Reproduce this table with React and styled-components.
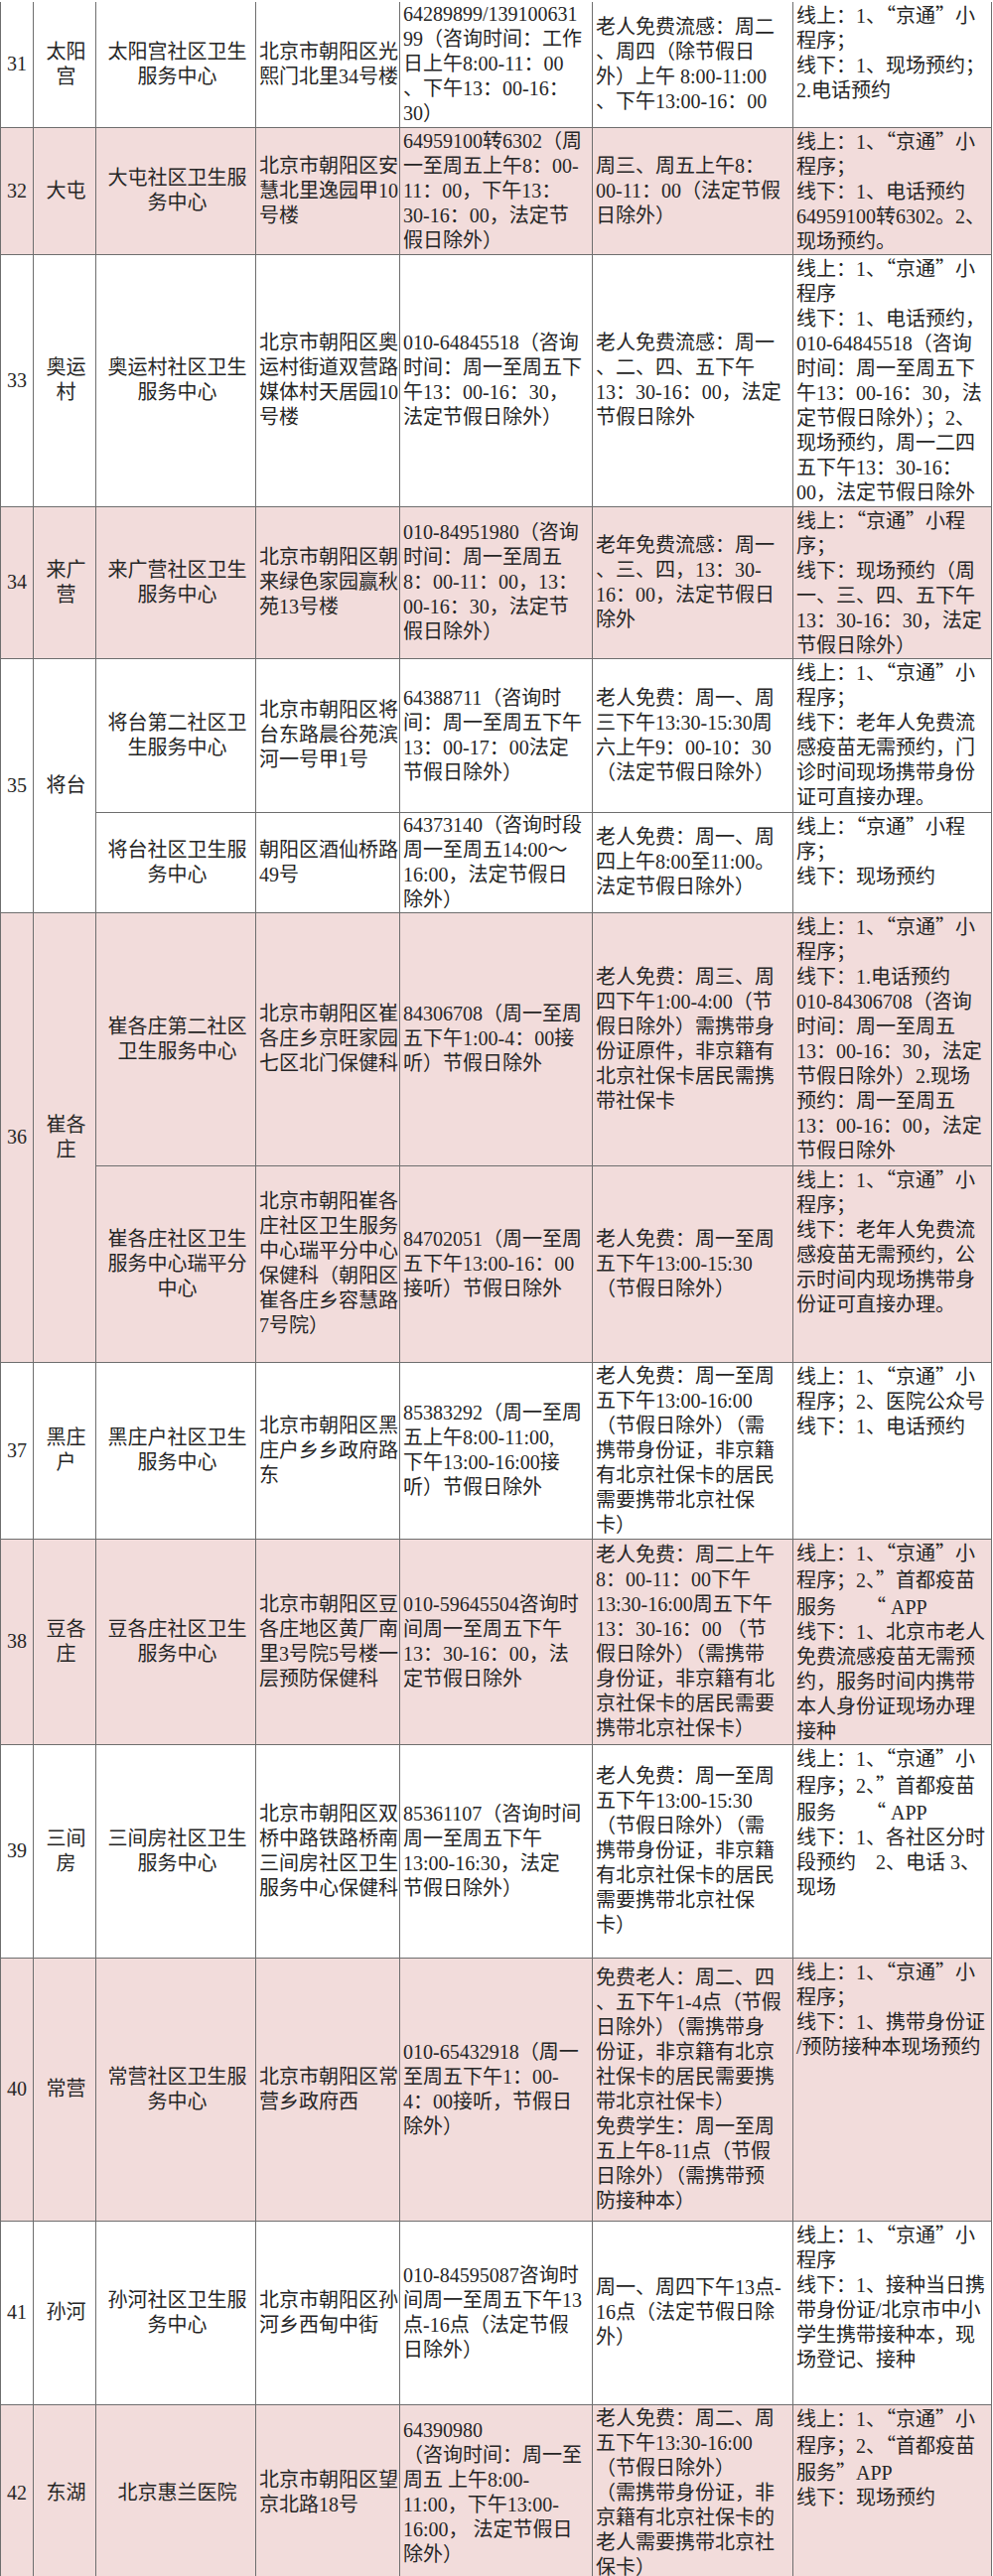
import React from "react";
import styled, { createGlobalStyle } from "styled-components";

const GlobalStyle = createGlobalStyle`
  html, body {
    margin: 0;
    padding: 0;
    background: #ffffff;
  }
  body {
    padding-top: 2px;
  }
`;

const Sheet = styled.table`
  width: 998px;
  table-layout: fixed;
  border-collapse: collapse;
  font-family: "Liberation Serif", "Noto Sans CJK SC", serif;
  font-size: 20px;
  line-height: 25px;
  color: #262626;

  tbody tr:first-child td {
    border-top: none;
  }
`;

const Col = styled.col`
  width: ${(p) => p.$w}px;
`;

const Row = styled.tr`
  height: ${(p) => p.$h}px;
  background: ${(p) => (p.$pink ? "#f2dcdb" : "#ffffff")};
`;

const Cell = styled.td`
  border: 1px solid #6e6e6e;
  padding: 0 0 0 3px;
  white-space: pre;
  background: inherit;
  text-align: ${(p) => (p.$center ? "center" : "left")};
  vertical-align: ${(p) => (p.$top ? "top" : "middle")};
`;

const NoCell = styled(Cell)`
  padding: 0;
`;

const Quote = styled.span`
  font-family: "Noto Sans CJK SC", sans-serif;
`;

const widths = [33, 63, 161, 145, 194, 202, 200];

const rows = [
  {
    no: "31", area: "太阳\n宫", h: 126,
    name: "太阳宫社区卫生\n服务中心",
    addr: "北京市朝阳区光\n熙门北里34号楼",
    phone: "64289899/139100631\n99（咨询时间：工作\n日上午8:00-11：00\n、下午13：00-16：\n30）",
    time: "老人免费流感：周二\n、周四（除节假日\n外）上午 8:00-11:00\n、下午13:00-16：00",
    way: "线上：1、“京通”小\n程序；\n线下：1、现场预约；\n2.电话预约",
  },
  {
    no: "32", area: "大屯", h: 127, pink: true,
    name: "大屯社区卫生服\n务中心",
    addr: "北京市朝阳区安\n慧北里逸园甲10\n号楼",
    phone: "64959100转6302（周\n一至周五上午8：00-\n11：00，下午13：\n30-16：00，法定节\n假日除外）",
    time: "周三、周五上午8：\n00-11：00（法定节假\n日除外）",
    way: "线上：1、“京通”小\n程序；\n线下：1、电话预约\n64959100转6302。2、\n现场预约。",
  },
  {
    no: "33", area: "奥运\n村", h: 254,
    name: "奥运村社区卫生\n服务中心",
    addr: "北京市朝阳区奥\n运村街道双营路\n媒体村天居园10\n号楼",
    phone: "010-64845518（咨询\n时间：周一至周五下\n午13：00-16：30，\n法定节假日除外）",
    time: "老人免费流感：周一\n、二、四、五下午\n13：30-16：00，法定\n节假日除外",
    way: "线上：1、“京通”小\n程序\n线下：1、电话预约，\n010-64845518（咨询\n时间：周一至周五下\n午13：00-16：30，法\n定节假日除外）；2、\n现场预约，周一二四\n五下午13：30-16：\n00，法定节假日除外",
  },
  {
    no: "34", area: "来广\n营", h: 153, pink: true,
    name: "来广营社区卫生\n服务中心",
    addr: "北京市朝阳区朝\n来绿色家园赢秋\n苑13号楼",
    phone: "010-84951980（咨询\n时间：周一至周五\n8：00-11：00，13：\n00-16：30，法定节\n假日除外）",
    time: "老年免费流感：周一\n、三、四，13：30-\n16：00，法定节假日\n除外",
    way: "线上：“京通”小程\n序；\n线下：现场预约（周\n一、三、四、五下午\n13：30-16：30，法定\n节假日除外）",
  },
  {
    no: "35", area: "将台", span: 2, h: 155,
    name: "将台第二社区卫\n生服务中心",
    addr: "北京市朝阳区将\n台东路晨谷苑滨\n河一号甲1号",
    phone: "64388711（咨询时\n间：周一至周五下午\n13：00-17：00法定\n节假日除外）",
    time: "老人免费：周一、周\n三下午13:30-15:30周\n六上午9：00-10：30\n（法定节假日除外）",
    way: "线上：1、“京通”小\n程序；\n线下：老年人免费流\n感疫苗无需预约，门\n诊时间现场携带身份\n证可直接办理。",
  },
  {
    h: 100,
    name: "将台社区卫生服\n务中心",
    addr: "朝阳区酒仙桥路\n49号",
    phone: "64373140（咨询时段\n周一至周五14:00～\n16:00，法定节假日\n除外）",
    time: "老人免费：周一、周\n四上午8:00至11:00。\n法定节假日除外）",
    way: "线上：“京通”小程\n序；\n线下：现场预约",
  },
  {
    no: "36", area: "崔各\n庄", span: 2, h: 255, pink: true,
    name: "崔各庄第二社区\n卫生服务中心",
    addr: "北京市朝阳区崔\n各庄乡京旺家园\n七区北门保健科",
    phone: "84306708（周一至周\n五下午1:00-4：00接\n听）节假日除外",
    time: "老人免费：周三、周\n四下午1:00-4:00（节\n假日除外）需携带身\n份证原件，非京籍有\n北京社保卡居民需携\n带社保卡",
    way: "线上：1、“京通”小\n程序；\n线下：1.电话预约\n010-84306708（咨询\n时间：周一至周五\n13：00-16：30，法定\n节假日除外）2.现场\n预约：周一至周五\n13：00-16：00，法定\n节假日除外",
  },
  {
    h: 198, pink: true,
    name: "崔各庄社区卫生\n服务中心瑞平分\n中心",
    addr: "北京市朝阳崔各\n庄社区卫生服务\n中心瑞平分中心\n保健科（朝阳区\n崔各庄乡容慧路\n7号院）",
    phone: "84702051（周一至周\n五下午13:00-16：00\n接听）节假日除外",
    time: "老人免费：周一至周\n五下午13:00-15:30\n（节假日除外）",
    way: "线上：1、“京通”小\n程序；\n线下：老年人免费流\n感疫苗无需预约，公\n示时间内现场携带身\n份证可直接办理。",
  },
  {
    no: "37", area: "黑庄\n户", h: 178,
    name: "黑庄户社区卫生\n服务中心",
    addr: "北京市朝阳区黑\n庄户乡乡政府路\n东",
    phone: "85383292（周一至周\n五上午8:00-11:00,\n下午13:00-16:00接\n听）节假日除外",
    time: "老人免费：周一至周\n五下午13:00-16:00\n（节假日除外）（需\n携带身份证，非京籍\n有北京社保卡的居民\n需要携带北京社保\n卡）",
    way: "线上：1、“京通”小\n程序；2、医院公众号\n线下：1、电话预约",
  },
  {
    no: "38", area: "豆各\n庄", h: 204, pink: true,
    name: "豆各庄社区卫生\n服务中心",
    addr: "北京市朝阳区豆\n各庄地区黄厂南\n里3号院5号楼一\n层预防保健科",
    phone: "010-59645504咨询时\n间周一至周五下午\n13：30-16：00，法\n定节假日除外",
    time: "老人免费：周二上午\n8：00-11：00下午\n13:30-16:00周五下午\n13：30-16：00 （节\n假日除外）（需携带\n身份证，非京籍有北\n京社保卡的居民需要\n携带北京社保卡）",
    way: "线上：1、“京通”小\n程序；2、”首都疫苗\n服务　　“ APP\n线下：1、北京市老人\n免费流感疫苗无需预\n约，服务时间内携带\n本人身份证现场办理\n接种",
  },
  {
    no: "39", area: "三间\n房", h: 215,
    name: "三间房社区卫生\n服务中心",
    addr: "北京市朝阳区双\n桥中路铁路桥南\n三间房社区卫生\n服务中心保健科",
    phone: "85361107（咨询时间\n周一至周五下午\n13:00-16:30，法定\n节假日除外）",
    time: "老人免费：周一至周\n五下午13:00-15:30\n（节假日除外）（需\n携带身份证，非京籍\n有北京社保卡的居民\n需要携带北京社保\n卡）",
    way: "线上：1、“京通”小\n程序；2、”首都疫苗\n服务　　“ APP\n线下：1、各社区分时\n段预约　2、电话 3、\n现场",
  },
  {
    no: "40", area: "常营", h: 265, pink: true,
    name: "常营社区卫生服\n务中心",
    addr: "北京市朝阳区常\n营乡政府西",
    phone: "010-65432918（周一\n至周五下午1：00-\n4：00接听，节假日\n除外）",
    time: "免费老人：周二、四\n、五下午1-4点（节假\n日除外）（需携带身\n份证，非京籍有北京\n社保卡的居民需要携\n带北京社保卡）\n免费学生：周一至周\n五上午8-11点（节假\n日除外）（需携带预\n防接种本）",
    way: "线上：1、“京通”小\n程序；\n线下：1、携带身份证\n/预防接种本现场预约",
  },
  {
    no: "41", area: "孙河", h: 185,
    name: "孙河社区卫生服\n务中心",
    addr: "北京市朝阳区孙\n河乡西甸中街",
    phone: "010-84595087咨询时\n间周一至周五下午13\n点-16点（法定节假\n日除外）",
    time: "周一、周四下午13点-\n16点（法定节假日除\n外）",
    way: "线上：1、“京通”小\n程序\n线下：1、接种当日携\n带身份证/北京市中小\n学生携带接种本，现\n场登记、接种",
  },
  {
    no: "42", area: "东湖", h: 178, pink: true,
    name: "北京惠兰医院",
    addr: "北京市朝阳区望\n京北路18号",
    phone: "64390980\n（咨询时间：周一至\n周五 上午8:00-\n11:00，下午13:00-\n16:00， 法定节假日\n除外）",
    time: "老人免费：周二、周\n五下午13:30-16:00\n（节假日除外）\n（需携带身份证，非\n京籍有北京社保卡的\n老人需要携带北京社\n保卡）",
    way: "线上：1、“京通”小\n程序；2、“首都疫苗\n服务”APP\n线下：现场预约",
  },
];

// quotes get the CJK face so they sit full width like the original
const Text = ({ children }) =>
  children.split(/([“”])/).map((part, i) =>
    part === "“" || part === "”" ? <Quote key={i}>{part}</Quote> : part
  );

export default function App() {
  return (
    <>
      <GlobalStyle />
      <Sheet lang="zh-CN">
        <colgroup>
          {widths.map((w, i) => (
            <Col key={i} $w={w} />
          ))}
        </colgroup>
        <tbody>
          {rows.map((r, i) => (
            <Row key={i} $h={r.h} $pink={r.pink}>
              {r.no && (
                <NoCell $center rowSpan={r.span || 1}>
                  {r.no}
                </NoCell>
              )}
              {r.area && (
                <Cell $center rowSpan={r.span || 1}>
                  {r.area}
                </Cell>
              )}
              <Cell $center>{r.name}</Cell>
              <Cell>{r.addr}</Cell>
              <Cell>{r.phone}</Cell>
              <Cell>{r.time}</Cell>
              <Cell $top>
                <Text>{r.way}</Text>
              </Cell>
            </Row>
          ))}
        </tbody>
      </Sheet>
    </>
  );
}
